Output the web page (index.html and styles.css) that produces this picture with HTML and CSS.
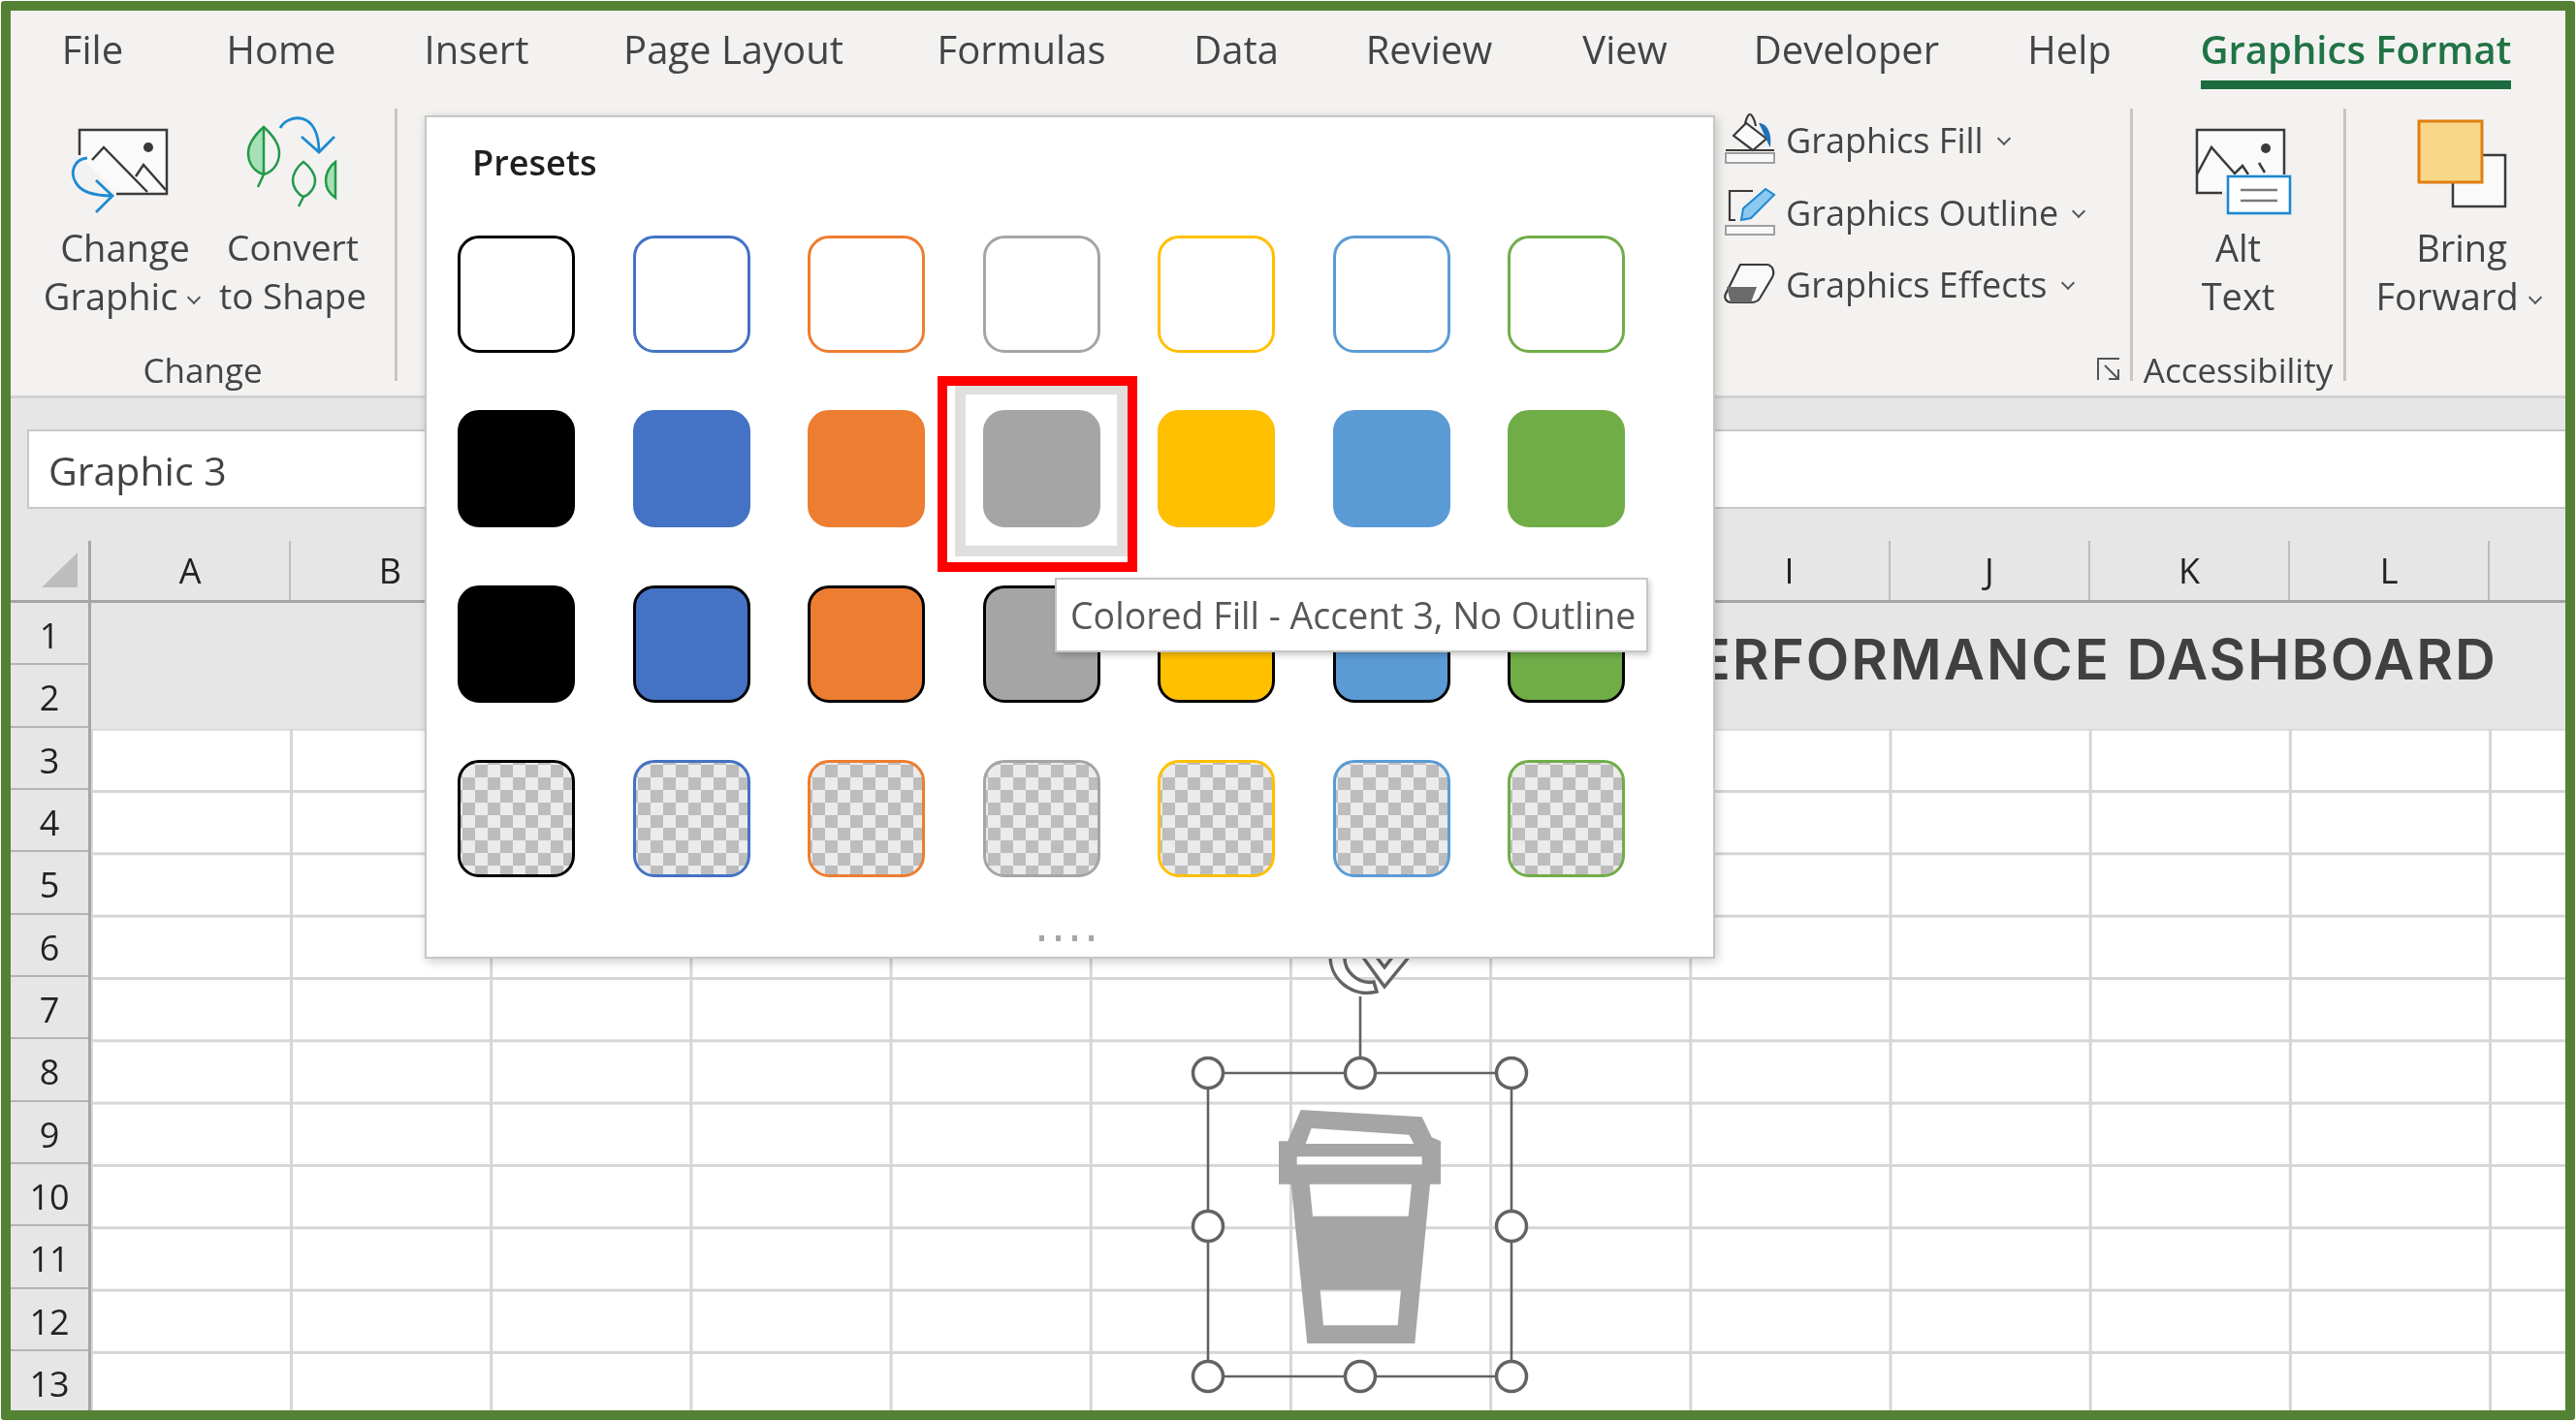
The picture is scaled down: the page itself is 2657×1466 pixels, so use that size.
FILE: index.html
```html
<!DOCTYPE html>
<html lang="en">
<head>
    <meta charset="UTF-8">
    <title>Graphics Format presets</title>
    <link rel="stylesheet" href="styles.css">
</head>
<body>
<div class="frame">
    <div class="ribbon">
        <div class="tabs">
            <div class="tab"><span>File</span></div>
            <div class="tab"><span>Home</span></div>
            <div class="tab"><span>Insert</span></div>
            <div class="tab"><span>Page Layout</span></div>
            <div class="tab"><span>Formulas</span></div>
            <div class="tab"><span>Data</span></div>
            <div class="tab"><span>Review</span></div>
            <div class="tab"><span>View</span></div>
            <div class="tab"><span>Developer</span></div>
            <div class="tab"><span>Help</span></div>
            <div class="tab active"><span>Graphics Format</span></div>
        </div>
        <div class="groups">
            <div class="group group-change">
                <div class="big-buttons">
                    <div class="big-btn btn-change">
                        <svg class="big-icon" viewBox="69 112 120 120">
                            <path d="M82 160V134h90v66h-52" fill="#fafafa" stroke="#3b3a39" stroke-width="2.5"/>
                            <circle cx="153" cy="152" r="5" fill="#3b3a39"/>
                            <path d="M95 165l12-13 45 46M140 182l8-12 23 26" fill="none" stroke="#3b3a39" stroke-width="2.5"/>
                            <path d="M90 163c-14 1-18 15-12 25 5 10 18 14 38 14M99 186l17 16-17 17" fill="none" stroke="#1e8bd1" stroke-width="2.8"/>
                        </svg>
                        <div class="big-label">Change</div>
                        <div class="big-label">Graphic <i class="chev"></i></div>
                    </div>
                    <div class="big-btn btn-convert">
                        <svg class="big-icon" viewBox="242 112 120 120">
                            <path d="M272 131c-10 9-16 19-16 27 0 12 8 20 16 22zM346 167c-7 5-10 13-10 19 0 8 4 14 10 18z" fill="#a6e0b4"/>
                            <path d="M272 131c-10 9-16 19-16 27 0 12 8 20 16 22 8-2 16-10 16-22 0-8-6-18-16-27zM272 131v49l-6 13M313 167c-7 5-11 13-11 19 0 8 6 15 11 17 6-2 12-9 12-17 0-6-5-14-12-19zM313 203l-5 10M346 167c-7 5-10 13-10 19 0 8 4 14 10 18z" fill="none" stroke="#23994a" stroke-width="2.5"/>
                            <path d="M289 132c7-14 40-20 40 25M311 141l18 16 16-16" fill="none" stroke="#1e8bd1" stroke-width="2.8"/>
                        </svg>
                        <div class="big-label narrow">Convert</div>
                        <div class="big-label narrow">to Shape</div>
                    </div>
                </div>
                <div class="group-label">Change</div>
            </div>

            <div class="group group-style">
                <div class="style-row">
                    <svg class="style-icon" viewBox="1777 116 56 60">
                        <path d="M1800 130c0-6 3-12 5-12s5 6 6 12" fill="none" stroke="#3b3a39" stroke-width="2.2"/>
                        <path d="M1788 140l13-13 21 16-14 12z" fill="#fafafa" stroke="#3b3a39" stroke-width="2.2"/>
                        <path d="M1814 127c8 0 14 9 12 25-4-6-6-14-12-25z" fill="#1e6fb8"/>
                        <path d="M1780 155h50" stroke="#3b3a39" stroke-width="2"/>
                        <rect x="1780" y="158" width="50" height="10" fill="#f8f8f8" stroke="#a0a0a0" stroke-width="2"/>
                    </svg>
                    <span>Graphics Fill</span><i class="chev"></i>
                </div>
                <div class="style-row">
                    <svg class="style-icon" viewBox="1777 190 56 60">
                        <path d="M1808 196h-24v30h6" fill="none" stroke="#3b3a39" stroke-width="2.2"/>
                        <path d="M1796 226l2-12 23-20 9 6-24 24z" fill="#8cc8f0" stroke="#1e88d0" stroke-width="2"/>
                        <rect x="1780" y="232" width="50" height="9" fill="#f8f8f8" stroke="#a0a0a0" stroke-width="2"/>
                    </svg>
                    <span>Graphics Outline</span><i class="chev"></i>
                </div>
                <div class="style-row">
                    <svg class="style-icon" viewBox="1777 265 56 60">
                        <path d="M1795 273h27c6 0 9 7 6 13l-13 22c-2 3-5 4-9 4h-20c-6 0-8-5-6-9z" fill="#fafafa" stroke="#3b3a39" stroke-width="2.2"/>
                        <path d="M1781 296h31l-6 16h-21z" fill="#6b6b6b"/>
                    </svg>
                    <span>Graphics Effects</span><i class="chev"></i>
                </div>
                <div class="launcher-row">
                    <svg class="launcher" viewBox="2164 369 24 24">
                        <path d="M2187 370h-22v22M2172 377l14 14M2186 381v10h-10" fill="none" stroke="#555" stroke-width="2"/>
                    </svg>
                </div>
            </div>

            <div class="group group-access">
                <div class="big-btn">
                    <svg class="big-icon" viewBox="2249 112 120 120">
                        <path d="M2292 199h-26v-65h90v46" fill="#fafafa" stroke="#3b3a39" stroke-width="2.5"/>
                        <circle cx="2337" cy="153" r="5" fill="#3b3a39"/>
                        <path d="M2266 180l15-28 24 27 8-8 6 9M2330 168l6 10" fill="none" stroke="#3b3a39" stroke-width="2.5"/>
                        <rect x="2298" y="182" width="64" height="38" fill="#fff" stroke="#1e88d0" stroke-width="2.6"/>
                        <path d="M2311 196h38M2311 207h38" stroke="#7a7a7a" stroke-width="2.5"/>
                    </svg>
                    <div class="big-label">Alt</div>
                    <div class="big-label">Text</div>
                </div>
                <div class="group-label">Accessibility</div>
            </div>

            <div class="group group-arrange">
                <div class="big-btn">
                    <svg class="big-icon" viewBox="2479 112 120 120">
                        <path d="M2560 160h24v53h-54v-25" fill="#fafafa" stroke="#3b3a39" stroke-width="2.5"/>
                        <rect x="2495" y="125" width="65" height="63" fill="#f8d888" stroke="#e07f10" stroke-width="3"/>
                    </svg>
                    <div class="big-label">Bring</div>
                    <div class="big-label">Forward <i class="chev"></i></div>
                </div>
            </div>
        </div>
    </div>

    <div class="formula">
        <div class="formula-bar"><span class="name-box">Graphic 3</span></div>
    </div>

    <div class="sheet">
        <div class="corner"><div class="corner-tri"></div></div>
        <div class="col-heads">
            <div>A</div><div>B</div><div>C</div><div>D</div><div>E</div><div>F</div><div>G</div>
            <div>H</div><div>I</div><div>J</div><div>K</div><div>L</div><div></div>
        </div>
        <div class="row-heads">
            <div>1</div><div>2</div><div>3</div><div>4</div><div>5</div><div>6</div><div>7</div>
            <div>8</div><div>9</div><div>10</div><div>11</div><div>12</div><div>13</div>
        </div>
        <div class="cells">
            <div class="title-band">PERFORMANCE DASHBOARD</div>
        </div>
    </div>

    <!-- selected graphic on the sheet -->
    <svg class="selection" viewBox="1200 970 400 480">
        <path d="M1372 985a38 38 0 0 0 48 38l-3-10a26 26 0 0 1-30-28" fill="#fff" stroke="#636363" stroke-width="3.5"/>
        <path d="M1404 985l24 33 27-33" fill="#fff" stroke="#636363" stroke-width="3.5"/>
        <path d="M1418 985l10 13 10-13" fill="none" stroke="#636363" stroke-width="3.5"/>
        <path d="M1403 1028v79M1246 1107h313v313h-313z" fill="none" stroke="#636363" stroke-width="2.6"/>
        <path fill="#a5a5a5" fill-rule="evenodd" d="M1341.7 1145l125 7.3 10 21 9.300 4v44.400h-11l-15.700 164.300h-111l-16.600-164.300h-12.700v-44.400h9.300zM1352.700 1164l100.600 6.700 5 9.300h-111.600zM1337.700 1193.300h129v8.400h-129zM1350.700 1221.700h105.300l-3.300 33h-98.700zM1361.700 1330.700h83.300l-3.300 36.600h-76.700z"/>
        <g class="handle">
            <circle cx="1246" cy="1107" r="15.500"/><circle cx="1403" cy="1107" r="15.500"/><circle cx="1559" cy="1107" r="15.500"/>
            <circle cx="1246" cy="1265" r="15.500"/><circle cx="1559" cy="1265" r="15.500"/>
            <circle cx="1246" cy="1420" r="15.500"/><circle cx="1403" cy="1420" r="15.500"/><circle cx="1559" cy="1420" r="15.500"/>
        </g>
    </svg>

    <!-- presets gallery -->
    <div class="presets">
        <div class="presets-title">Presets</div>
        <div class="swatches">
            <div class="swatch outline c-black"></div><div class="swatch outline c-blue"></div><div class="swatch outline c-orange"></div><div class="swatch outline c-gray"></div><div class="swatch outline c-yellow"></div><div class="swatch outline c-sky"></div><div class="swatch outline c-green"></div>
            <div class="swatch fill c-black"></div><div class="swatch fill c-blue"></div><div class="swatch fill c-orange"></div><div class="swatch fill c-gray"></div><div class="swatch fill c-yellow"></div><div class="swatch fill c-sky"></div><div class="swatch fill c-green"></div>
            <div class="swatch filled c-black"></div><div class="swatch filled c-blue"></div><div class="swatch filled c-orange"></div><div class="swatch filled c-gray"></div><div class="swatch filled c-yellow"></div><div class="swatch filled c-sky"></div><div class="swatch filled c-green"></div>
            <div class="swatch checker c-black"></div><div class="swatch checker c-blue"></div><div class="swatch checker c-orange"></div><div class="swatch checker c-gray"></div><div class="swatch checker c-yellow"></div><div class="swatch checker c-sky"></div><div class="swatch checker c-green"></div>
        </div>
        <div class="grip"><i></i><i></i><i></i><i></i></div>
    </div>

    <div class="red-mark"><div class="hover-frame"></div></div>
    <div class="tooltip">Colored Fill - Accent 3, No Outline</div>
</div>
</body>
</html>
```

FILE: styles.css
```css
body {
    margin: 0;
    background: #fff;
    font-family: "Open Sans", "Noto Sans", sans-serif;
    color: #444;
    overflow: hidden;
}
.frame {
    position: relative;
    box-sizing: border-box;
    width: 2655px;
    height: 1464px;
    margin: 1px;
    border: 10px solid #548235;
    border-radius: 3px;
    background: #fff;
    overflow: hidden;
    display: flex;
    flex-direction: column;
    filter: blur(0.5px);
}

/* ribbon */
.ribbon {
    height: 397px;
    flex: none;
    background: #f3f2f1;
}
.tabs {
    height: 101px;
    display: grid;
    grid-template-columns: 169px 220px 183px 347px 247px 196px 202px 202px 255px 205px 386px;
    font-size: 40px;
}
.tab {
    text-align: center;
}
.tab span {
    display: inline-block;
    box-sizing: border-box;
    height: 81px;
    padding-top: 8px;
    line-height: 63px;
}
.tab.active span {
    color: #217346;
    font-weight: 600;
    border-bottom: 9px solid #1b6b3e;
}
.groups {
    display: flex;
    height: 281px;
}
.group {
    display: flex;
    flex-direction: column;
    box-sizing: border-box;
    border-right: 3px solid #c8c6c4;
}
.group-label {
    margin-top: auto;
    font-size: 35px;
    line-height: 22px;
    text-align: center;
}
.group-change {
    width: 399px;
}
.big-buttons {
    display: flex;
    padding-left: 19px;
}
.big-btn {
    display: flex;
    flex-direction: column;
    align-items: center;
}
.btn-change {
    width: 198px;
}
.btn-convert {
    width: 148px;
}
.big-icon {
    width: 120px;
    height: 120px;
    margin-bottom: -2px;
}
.big-label {
    font-size: 38px;
    line-height: 50px;
    white-space: nowrap;
}
.big-label.narrow {
    font-size: 37px;
}
.chev {
    display: inline-block;
    width: 8px;
    height: 8px;
    margin: 0 8px 8px 2px;
    border-right: 2.5px solid #555;
    border-bottom: 2.5px solid #555;
    transform: rotate(45deg);
}
.group-style {
    margin-left: auto;
    width: 423px;
    padding-top: 4px;
    font-size: 36px;
}
.style-row {
    display: flex;
    align-items: center;
    height: 60px;
    margin-bottom: 14.5px;
    white-space: nowrap;
}
.style-row span {
    margin-top: -3px;
}
.style-row .chev {
    margin: 0 0 6px 16px;
}
.style-icon {
    width: 56px;
    height: 60px;
    margin-right: 9px;
    flex: none;
}
.launcher-row {
    margin-top: auto;
    display: flex;
    justify-content: flex-end;
    padding-right: 10px;
}
.launcher {
    width: 24px;
    height: 24px;
}
.group-access {
    width: 220px;
}
.group-arrange {
    width: 226px;
    padding-left: 12px;
    border-right: 0;
}
.group-arrange .big-btn {
    width: 214px;
}

/* name box and formula bar */
.formula {
    height: 150px;
    flex: none;
    box-sizing: border-box;
    padding: 35px 0 0 17px;
    background: #e6e6e6;
    border-top: 3px solid #d2d2d2;
}
.formula-bar {
    box-sizing: border-box;
    height: 82px;
    margin-top: -3px;
    padding-left: 20px;
    background: #fff;
    border: 2px solid #c8c8c8;
    border-right: 0;
    font-size: 41px;
    line-height: 80px;
    color: #444;
}

/* sheet */
.sheet {
    flex: 1;
    display: grid;
    grid-template-columns: 83px minmax(0, 1fr);
    grid-template-rows: 64px minmax(0, 1fr);
    min-height: 0;
    min-width: 0;
}
.corner {
    box-sizing: border-box;
    display: flex;
    justify-content: flex-end;
    align-items: flex-end;
    padding: 0 11px 13px 0;
    background: #e6e6e6;
    border-right: 3px solid #a6a6a6;
    border-bottom: 3px solid #a6a6a6;
}
.corner-tri {
    width: 37px;
    height: 36px;
    background: #bdbdbd;
    clip-path: polygon(100% 0, 100% 100%, 0 100%);
}
.col-heads {
    display: grid;
    grid-template-columns: repeat(13, 206.2px);
    box-sizing: border-box;
    overflow: hidden;
    background: #e6e6e6;
    border-bottom: 3px solid #a6a6a6;
    font-size: 36px;
    line-height: 61px;
    text-align: center;
    color: #222;
}
.col-heads div {
    box-sizing: border-box;
    border-right: 2px solid #bdbdbd;
}
.row-heads {
    box-sizing: border-box;
    background: #e6e6e6;
    border-right: 3px solid #a6a6a6;
    font-size: 36px;
    text-align: center;
    color: #222;
}
.row-heads div {
    box-sizing: border-box;
    height: 64.33px;
    line-height: 67px;
    border-bottom: 2px solid #b4b4b4;
}
.cells {
    background-color: #fff;
    background-image:
        linear-gradient(90deg, #d6d6d6 3px, transparent 3px),
        linear-gradient(#d6d6d6 3px, transparent 3px);
    background-size: 206.2px 100%, 100% 64.33px;
    background-position: 205px 0, 0 0;
}
.title-band {
    box-sizing: border-box;
    height: 130px;
    padding-right: 70px;
    background: #e6e6e6;
    text-align: right;
    font-family: "Inter", "Liberation Sans", sans-serif;
    font-size: 58px;
    font-weight: 600;
    letter-spacing: 2px;
    line-height: 116px;
    color: #404040;
}

/* things on top of the sheet */
.selection {
    position: absolute;
    left: 1189px;
    top: 959px;
    width: 400px;
    height: 480px;
}
.handle circle {
    fill: #fff;
    stroke: #636363;
    stroke-width: 3.5;
}
.presets {
    position: absolute;
    left: 427px;
    top: 108px;
    box-sizing: border-box;
    width: 1331px;
    height: 870px;
    padding-left: 32px;
    background: #fff;
    border: 2px solid #c8c6c4;
    box-shadow: 2px 3px 10px rgba(0,0,0,0.2);
}
.presets-title {
    height: 122px;
    padding-left: 15px;
    font-size: 36px;
    font-weight: 600;
    line-height: 94px;
    color: #201f1e;
}
.swatches {
    display: grid;
    grid-template-columns: repeat(7, 121px);
    grid-auto-rows: 121px;
    column-gap: 59.5px;
    row-gap: 59.3px;
}
.swatch {
    box-sizing: border-box;
    border-radius: 22px;
    border: 3px solid var(--c);
}
.c-black { --c: #000; }
.c-blue { --c: #4472c4; }
.c-orange { --c: #ed7d31; }
.c-gray { --c: #a5a5a5; }
.c-yellow { --c: #ffc000; }
.c-sky { --c: #5b9bd5; }
.c-green { --c: #70ad47; }
.swatch.fill {
    background: var(--c);
}
.swatch.filled {
    background: var(--c);
    border-color: #000;
}
.swatch.checker {
    background: repeating-conic-gradient(#bdbdbd 0 25%, #ebebeb 0 50%) 2px 2px / 26px 26px;
}
.grip {
    display: flex;
    gap: 12px;
    padding: 60px 0 0 600px;
}
.grip i {
    width: 5px;
    height: 6px;
    background: #a6a6a6;
}
.red-mark {
    position: absolute;
    left: 956px;
    top: 377px;
    box-sizing: border-box;
    width: 206px;
    height: 202px;
    padding: 0 0 6px 8px;
    border: 10px solid #f00;
    display: flex;
}
.hover-frame {
    flex: 1;
    border: 11px solid #e1dfdd;
    border-top-width: 9px;
}
.tooltip {
    position: absolute;
    left: 1077px;
    top: 585px;
    box-sizing: border-box;
    width: 612px;
    height: 77px;
    padding-left: 14px;
    background: #fff;
    border: 2px solid #c8c6c4;
    box-shadow: 2px 3px 6px rgba(0,0,0,0.2);
    font-size: 37.5px;
    line-height: 73px;
    color: #575757;
    white-space: nowrap;
}
```
